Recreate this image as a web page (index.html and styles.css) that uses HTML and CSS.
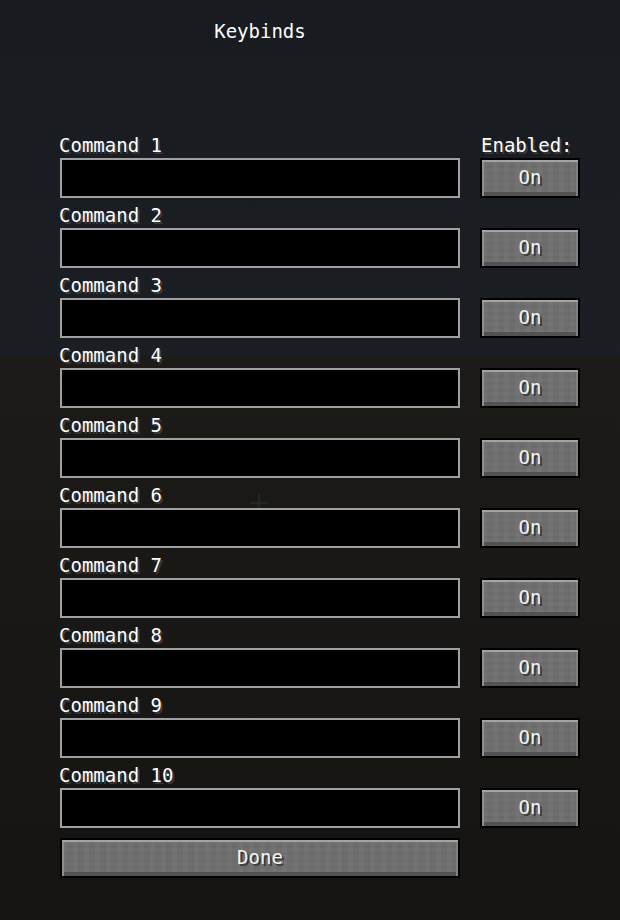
FILE: index.html
```html
<!DOCTYPE html>
<html lang="en">
<head>
    <meta charset="UTF-8">
    <meta name="viewport" content="width=device-width, initial-scale=1.0">
    <title>Keybinds</title>
    <link rel="stylesheet" href="styles.css">
</head>
<body>
    <div class="screen">
        <div class="crosshair"></div>
        <h1 class="title">Keybinds</h1>
        <main class="binds">
            <div class="bind">
                <label class="bind-label" for="cmd1">Command 1</label>
                <span class="bind-label side">Enabled:</span>
                <input class="bind-field" type="text" id="cmd1">
                <button class="mc-button toggle">On</button>
            </div>
            <div class="bind">
                <label class="bind-label" for="cmd2">Command 2</label>
                <span class="bind-label side"></span>
                <input class="bind-field" type="text" id="cmd2">
                <button class="mc-button toggle">On</button>
            </div>
            <div class="bind">
                <label class="bind-label" for="cmd3">Command 3</label>
                <span class="bind-label side"></span>
                <input class="bind-field" type="text" id="cmd3">
                <button class="mc-button toggle">On</button>
            </div>
            <div class="bind">
                <label class="bind-label" for="cmd4">Command 4</label>
                <span class="bind-label side"></span>
                <input class="bind-field" type="text" id="cmd4">
                <button class="mc-button toggle">On</button>
            </div>
            <div class="bind">
                <label class="bind-label" for="cmd5">Command 5</label>
                <span class="bind-label side"></span>
                <input class="bind-field" type="text" id="cmd5">
                <button class="mc-button toggle">On</button>
            </div>
            <div class="bind">
                <label class="bind-label" for="cmd6">Command 6</label>
                <span class="bind-label side"></span>
                <input class="bind-field" type="text" id="cmd6">
                <button class="mc-button toggle">On</button>
            </div>
            <div class="bind">
                <label class="bind-label" for="cmd7">Command 7</label>
                <span class="bind-label side"></span>
                <input class="bind-field" type="text" id="cmd7">
                <button class="mc-button toggle">On</button>
            </div>
            <div class="bind">
                <label class="bind-label" for="cmd8">Command 8</label>
                <span class="bind-label side"></span>
                <input class="bind-field" type="text" id="cmd8">
                <button class="mc-button toggle">On</button>
            </div>
            <div class="bind">
                <label class="bind-label" for="cmd9">Command 9</label>
                <span class="bind-label side"></span>
                <input class="bind-field" type="text" id="cmd9">
                <button class="mc-button toggle">On</button>
            </div>
            <div class="bind">
                <label class="bind-label" for="cmd10">Command 10</label>
                <span class="bind-label side"></span>
                <input class="bind-field" type="text" id="cmd10">
                <button class="mc-button toggle">On</button>
            </div>
            <button class="mc-button done">Done</button>
        </main>
    </div>
</body>
</html>
```

FILE: styles.css
```css
body {
    margin: 0;
    padding: 0;
    background: linear-gradient(#181b20 0, #1b1e23 355px, #1c1b18 357px, #151412 920px);
    font-family: "DejaVu Sans Mono", monospace;
    font-size: 19px;
    color: #fff;
}

.screen {
    position: relative;
    z-index: 0;
    width: 620px;
    height: 920px;
    overflow: hidden;
}

/* faint crosshair behind the fields */
.crosshair {
    position: absolute;
    left: 250px;
    top: 494px;
    width: 18px;
    height: 18px;
    z-index: -1;
    background:
        linear-gradient(#252525, #252525) 8px 0 / 2px 18px no-repeat,
        linear-gradient(#252525, #252525) 0 8px / 18px 2px no-repeat;
}

.title {
    width: 400px;
    margin: 0 0 0 60px;
    padding-top: 21px;
    height: 130px;
    box-sizing: border-box;
    font-size: 19px;
    font-weight: normal;
    line-height: 20px;
    text-align: center;
}

.binds {
    padding-left: 60px;
    display: flex;
    flex-direction: column;
    gap: 2px;
}

.bind {
    display: grid;
    grid-template-columns: 400px 100px;
    grid-template-rows: 28px 40px;
    column-gap: 20px;
}

.bind-label {
    display: block;
    padding-top: 5px;
    line-height: 20px;
    margin-left: -1px;
    text-shadow: 2px 2px 0 #3a3a3a;
    white-space: nowrap;
}

.bind-label.side {
    margin-left: 1px;
}

.bind-field {
    box-sizing: border-box;
    width: 400px;
    height: 40px;
    margin: 0;
    padding: 0 8px;
    background: #000;
    border: 2px solid #a0a0a0;
    border-radius: 0;
    color: #e0e0e0;
    font: inherit;
    outline: none;
}

.mc-button {
    box-sizing: border-box;
    height: 40px;
    margin: 0;
    padding: 0 0 2px;
    border: 2px solid #000;
    border-radius: 0;
    background-color: #6f6f6f;
    background-image:
        repeating-linear-gradient(90deg, rgba(255,255,255,0.018) 0 5px, rgba(0,0,0,0.018) 5px 11px),
        repeating-linear-gradient(0deg, rgba(0,0,0,0.018) 0 3px, rgba(255,255,255,0.012) 3px 7px);
    box-shadow:
        inset 0 2px 0 #a4a4a4,
        inset 2px 0 0 #8e8e8e,
        inset -2px 0 0 #808080,
        inset 0 -4px 0 #525252;
    color: #f2f2f2;
    font: inherit;
    line-height: 20px;
    text-shadow: 2px 2px 0 #383838;
    cursor: pointer;
}

.toggle {
    width: 100px;
}

.done {
    width: 400px;
    margin-top: 8px;
}
```
